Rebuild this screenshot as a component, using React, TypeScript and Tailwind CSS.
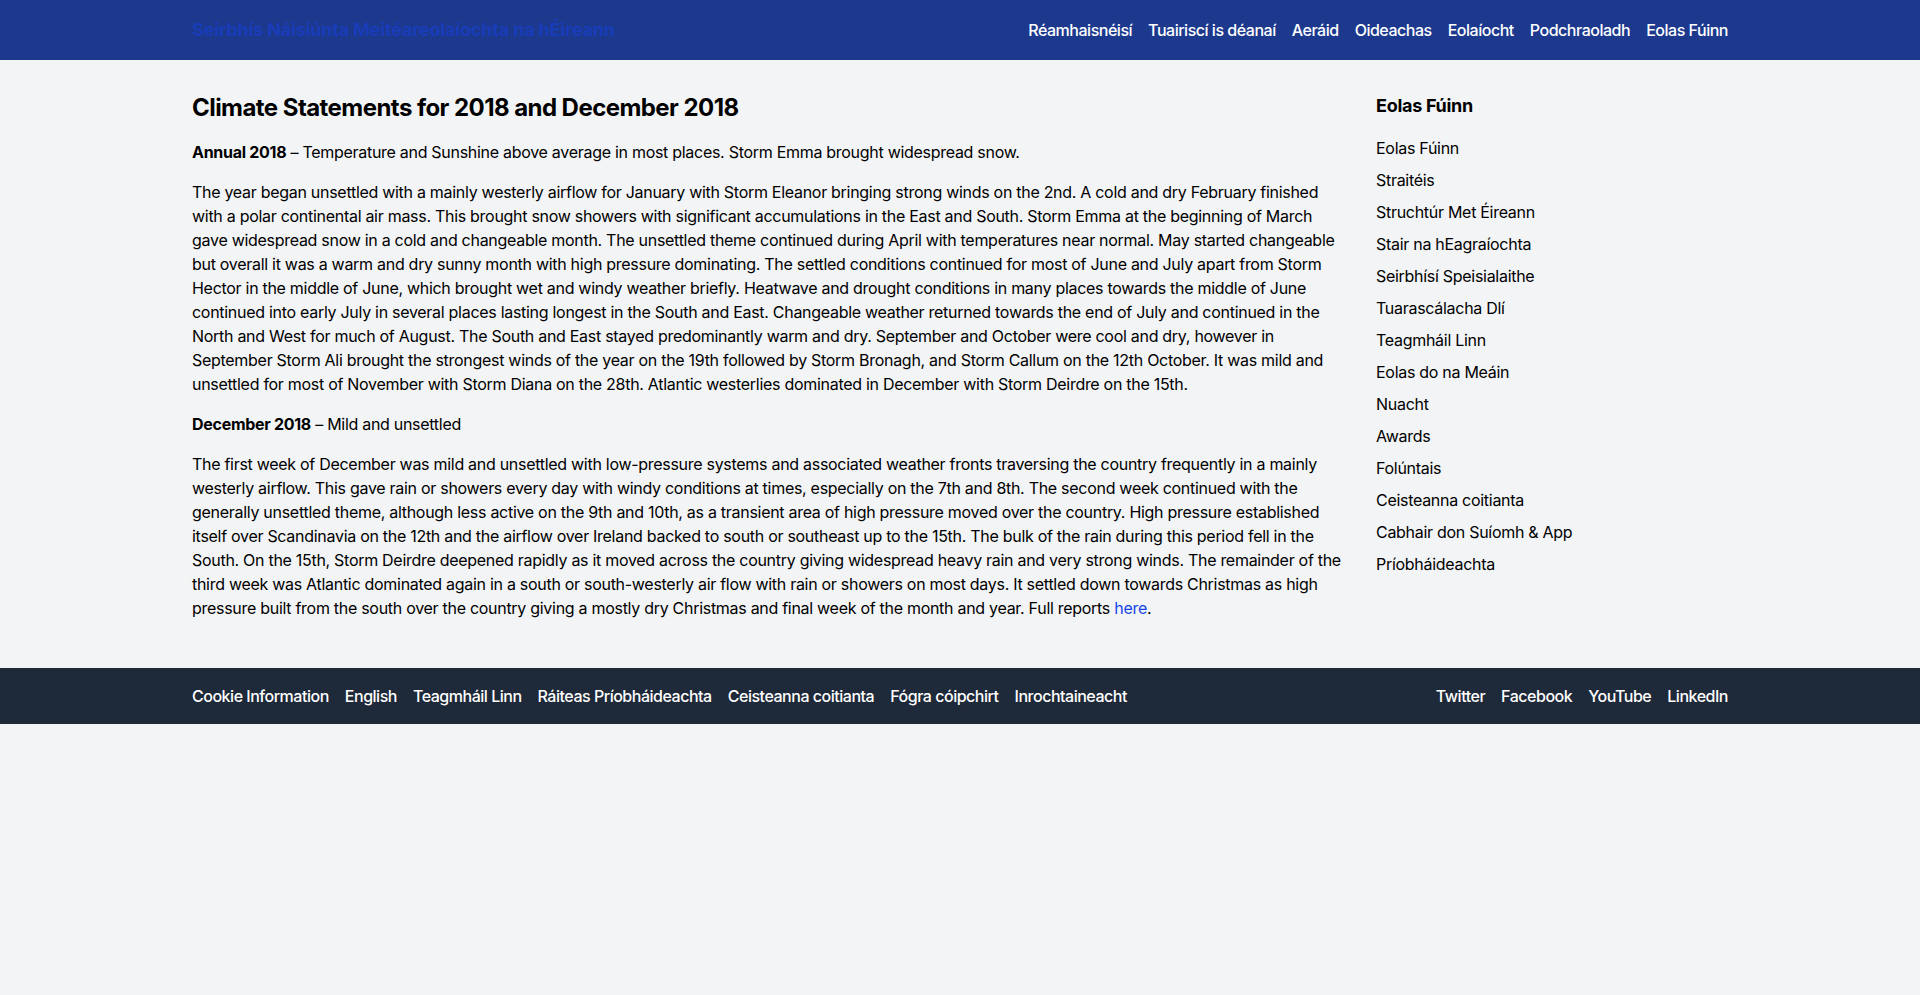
import React from "react";

const navLinks = [
  "Réamhaisnéisí",
  "Tuairiscí is déanaí",
  "Aeráid",
  "Oideachas",
  "Eolaíocht",
  "Podchraoladh",
  "Eolas Fúinn",
];

const sideLinks = [
  "Eolas Fúinn",
  "Straitéis",
  "Struchtúr Met Éireann",
  "Stair na hEagraíochta",
  "Seirbhísí Speisialaithe",
  "Tuarascálacha Dlí",
  "Teagmháil Linn",
  "Eolas do na Meáin",
  "Nuacht",
  "Awards",
  "Folúntais",
  "Ceisteanna coitianta",
  "Cabhair don Suíomh & App",
  "Príobháideachta",
];

const footerLinks = [
  "Cookie Information",
  "English",
  "Teagmháil Linn",
  "Ráiteas Príobháideachta",
  "Ceisteanna coitianta",
  "Fógra cóipchirt",
  "Inrochtaineacht",
];

const socialLinks = ["Twitter", "Facebook", "YouTube", "LinkedIn"];

export default function App() {
  return (
    <div className="min-h-screen bg-gray-100 text-black tracking-[-0.018em] font-['Inter','Liberation_Sans',sans-serif]">
      <header className="bg-blue-900">
        <div className="max-w-screen-2xl mx-auto flex items-center justify-between py-4">
          <a href="#" className="text-lg font-bold text-blue-800 tracking-[-0.01em]">
            Seirbhís Náisiúnta Meitéareolaíochta na hÉireann
          </a>
          <nav className="flex gap-4">
            {navLinks.map((l) => (
              <a key={l} href="#" className="text-white font-medium tracking-[-0.03em]">
                {l}
              </a>
            ))}
          </nav>
        </div>
      </header>

      <div className="max-w-screen-2xl mx-auto flex gap-8 py-8">
        <main className="flex-1">
          <h1 className="text-2xl font-bold mb-4 tracking-[-0.023em]">Climate Statements for 2018 and December 2018</h1>
          <p className="mb-4">
            <strong>Annual 2018</strong> – Temperature and Sunshine above average in most places. Storm Emma brought
            widespread snow.
          </p>
          <p className="mb-4">
            The year began unsettled with a mainly westerly airflow for January with Storm Eleanor bringing strong winds
            on the 2nd. A cold and dry February finished with a polar continental air mass. This brought snow showers
            with significant accumulations in the East and South. Storm Emma at the beginning of March gave widespread
            snow in a cold and changeable month. The unsettled theme continued during April with temperatures near
            normal. May started changeable but overall it was a warm and dry sunny month with high pressure dominating.
            The settled conditions continued for most of June and July apart from Storm Hector in the middle of June,
            which brought wet and windy weather briefly. Heatwave and drought conditions in many places towards the
            middle of June continued into early July in several places lasting longest in the South and East.
            Changeable weather returned towards the end of July and continued in the North and West for much of August.
            The South and East stayed predominantly warm and dry. September and October were cool and dry, however in
            September Storm Ali brought the strongest winds of the year on the 19th followed by Storm Bronagh, and Storm
            Callum on the 12th October. It was mild and unsettled for most of November with Storm Diana on the 28th.
            Atlantic westerlies dominated in December with Storm Deirdre on the 15th.
          </p>
          <p className="mb-4">
            <strong>December 2018</strong> – Mild and unsettled
          </p>
          <p className="mb-4">
            The first week of December was mild and unsettled with low-pressure systems and associated weather fronts
            traversing the country frequently in a mainly westerly airflow. This gave rain or showers every day with
            windy conditions at times, especially on the 7th and 8th. The second week continued with the generally
            unsettled theme, although less active on the 9th and 10th, as a transient area of high pressure moved over
            the country. High pressure established itself over Scandinavia on the 12th and the airflow over Ireland
            backed to south or southeast up to the 15th. The bulk of the rain during this period fell in the South. On
            the 15th, Storm Deirdre deepened rapidly as it moved across the country giving widespread heavy rain and
            very strong winds. The remainder of the third week was Atlantic dominated again in a south or
            south-westerly air flow with rain or showers on most days. It settled down towards Christmas as high
            pressure built from the south over the country giving a mostly dry Christmas and final week of the month
            and year. Full reports{" "}
            <a href="#" className="text-blue-700">
              here
            </a>
            .
          </p>
        </main>

        <aside className="w-[352px] shrink-0">
          <h2 className="text-lg font-bold mb-4">Eolas Fúinn</h2>
          <ul className="space-y-2">
            {sideLinks.map((l) => (
              <li key={l}>
                <a href="#">{l}</a>
              </li>
            ))}
          </ul>
        </aside>
      </div>

      <footer className="bg-gray-800">
        <div className="max-w-screen-2xl mx-auto flex justify-between py-4">
          <div className="flex gap-4">
            {footerLinks.map((l) => (
              <a key={l} href="#" className="text-white font-medium tracking-[-0.03em]">
                {l}
              </a>
            ))}
          </div>
          <div className="flex gap-4">
            {socialLinks.map((l) => (
              <a key={l} href="#" className="text-white font-medium tracking-[-0.03em]">
                {l}
              </a>
            ))}
          </div>
        </div>
      </footer>
    </div>
  );
}
